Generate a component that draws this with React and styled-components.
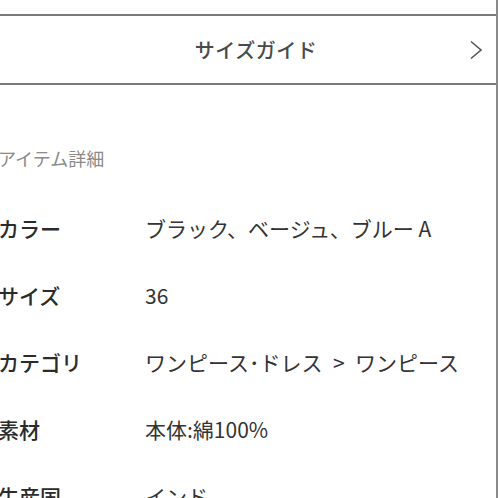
import React from "react";
import styled, { createGlobalStyle } from "styled-components";

const GlobalStyle = createGlobalStyle`
	html, body {
		margin: 0;
		padding: 0;
		background: #fff;
	}
	body {
		font-family: "Noto Sans CJK JP", "Noto Sans", sans-serif;
		color: #333;
	}
`;

const Page = styled.div`
	width: 498px;
	height: 498px;
	box-sizing: border-box;
	border-right: 2px solid #8a8a8a;
	overflow: hidden;
	padding-top: 14px;
`;

const GuideRow = styled.div`
	display: grid;
	grid-template-columns: 1fr auto 1fr;
	align-items: center;
	height: 67px;
	border-top: 2px solid #7a7a7a;
	border-bottom: 2px solid #7a7a7a;
	padding-left: 30px;
	padding-right: 14px;
`;

const GuideLabel = styled.span`
	grid-column: 2;
	font-size: 20px;
	font-weight: 500;
	color: #4a4a4a;
	letter-spacing: 0.5px;
`;

const Chevron = styled.svg`
	justify-self: end;
	width: 14px;
	height: 20px;
	margin-right: -1px;
`;

const Details = styled.section`
	margin-left: -2px;
	padding-top: 58px;
`;

const SectionTitle = styled.h2`
	margin: 0 0 40px;
	font-size: 18px;
	font-weight: 400;
	color: #8a8a8a;
	line-height: 30px;
`;

const Row = styled.div`
	display: grid;
	grid-template-columns: 147px 1fr;
	height: 67px;
	align-items: start;
	line-height: 30px;
	font-size: 21px;
`;

const Label = styled.span`
	font-weight: 500;
	color: #2b2b2b;
`;

const Value = styled.span`
	font-weight: 400;
	color: #333;
`;

const items = [
	["カラー", "ブラック、ベージュ、ブルー A"],
	["サイズ", "36"],
	["カテゴリ", "ワンピース\uFF65ドレス\u2002>\u2002ワンピース"],
	["素材", "本体:綿100%"],
	["生産国", "インド"],
];

const App = () => {
	return (
		<>
			<GlobalStyle />
			<Page>
				<GuideRow>
					<GuideLabel>サイズガイド</GuideLabel>
					<Chevron viewBox="0 0 14 20">
						<polyline
							points="2,1.5 12,10 2,18.5"
							fill="none"
							stroke="#555"
							strokeWidth="1.6"
						/>
					</Chevron>
				</GuideRow>
				<Details>
					<SectionTitle>アイテム詳細</SectionTitle>
					{items.map(([label, value]) => (
						<Row key={label}>
							<Label>{label}</Label>
							<Value>{value}</Value>
						</Row>
					))}
				</Details>
			</Page>
		</>
	);
};

export default App;
